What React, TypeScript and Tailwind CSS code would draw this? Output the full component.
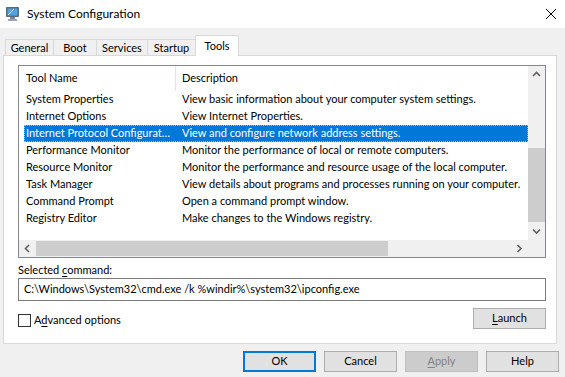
import React from "react";

const tools = [
  ["System Properties", "View basic information about your computer system settings."],
  ["Internet Options", "View Internet Properties."],
  ["Internet Protocol Configurat…", "View and configure network address settings."],
  ["Performance Monitor", "Monitor the performance of local or remote computers."],
  ["Resource Monitor", "Monitor the performance and resource usage of the local computer."],
  ["Task Manager", "View details about programs and processes running on your computer."],
  ["Command Prompt", "Open a command prompt window."],
  ["Registry Editor", "Make changes to the Windows registry."],
];

const tabs: [string, string][] = [
  ["General", "w-[48px]"],
  ["Boot", "w-[43px]"],
  ["Services", "w-[51px]"],
  ["Startup", "w-[48px]"],
];

function Chevron({ dir }: { dir: "up" | "down" | "left" | "right" }) {
  const d = {
    up: "M1 5 L4.5 1.5 L8 5",
    down: "M1 1.5 L4.5 5 L8 1.5",
    left: "M5 1 L1.5 4.5 L5 8",
    right: "M1.5 1 L5 4.5 L1.5 8",
  }[dir];
  const horiz = dir === "left" || dir === "right";
  return (
    <svg width={horiz ? 7 : 9} height={horiz ? 9 : 7} viewBox={horiz ? "0 0 7 9" : "0 0 9 7"}>
      <path d={d} fill="none" stroke="#606060" strokeWidth="1.6" />
    </svg>
  );
}

function AppIcon() {
  return (
    <svg width="16" height="16" viewBox="0 0 16 16">
      <rect x="1" y="1" width="13" height="10" rx="1" fill="#5a6a7e" />
      <rect x="2.5" y="2.5" width="10" height="7" fill="#4da3e8" />
      <path d="M3 9 L9 3" stroke="#cfe8ff" strokeWidth="1" />
      <rect x="5" y="11" width="5" height="2" fill="#7b8796" />
      <rect x="3" y="13" width="9" height="2" rx="0.5" fill="#9aa5b1" />
    </svg>
  );
}

function Button({ children, primary, disabled, className = "" }: { children: React.ReactNode; primary?: boolean; disabled?: boolean; className?: string }) {
  return (
    <div
      className={
        "flex items-center justify-center h-[21px] w-[73px] " +
        (primary
          ? "border-2 border-[#0078d7] bg-[#e1e1e1] text-black "
          : disabled
          ? "border border-[#bfbfbf] bg-[#cccccc] text-[#838383] "
          : "border border-[#adadad] bg-[#e1e1e1] text-black ") +
        className
      }
    >
      {children}
    </div>
  );
}

export default function App() {
  return (
    <div className="w-[565px] h-[377px] bg-[#f0f0f0] flex flex-col overflow-hidden text-[11px] text-black" style={{ fontFamily: "Lato, sans-serif" }}>
      {/* TITLE BAR */}
      <div className="h-[28px] bg-white flex items-center shrink-0">
        <div className="ml-[5px] mt-[-1px]"><AppIcon /></div>
        <span className="ml-[6px] text-[12px] mt-[-1px]">System Configuration</span>
        <svg className="ml-auto mr-[9px]" width="10" height="10" viewBox="0 0 10 10">
          <path d="M0 0 L10 10 M10 0 L0 10" stroke="#000" strokeWidth="1" />
        </svg>
      </div>

      {/* TABS */}
      <div className="flex items-end h-[21px] mt-[7px] ml-[5px] mb-[-1px] relative z-10">
        {tabs.map(([t, w]) => (
          <div key={t} className={"h-[16px] mb-px flex items-center justify-center border-t border-l border-[#d9d9d9] bg-[#f0f0f0] leading-none " + w}>
            {t}
          </div>
        ))}
        <div className="h-[21px] w-[44px] flex items-start justify-center pt-[4px] border-x border-t border-[#d9d9d9] bg-white leading-none">
          Tools
        </div>
      </div>

      {/* PANEL */}
      <div className="ml-[3px] w-[554px] h-[289px] border border-[#d9d9d9] bg-white pl-[14px] pr-[10px] pt-[9px] flex flex-col shrink-0">
        {/* LIST */}
        <div className="h-[193px] border border-[#828790] grid grid-cols-[1fr_17px] grid-rows-[1fr_17px]">
          <div className="overflow-hidden">
            <div className="h-[25px] flex items-center">
              <div className="w-[157px] pl-[7px] h-full flex items-center border-r border-[#e5e5e5]">Tool Name</div>
              <div className="pl-[6px]">Description</div>
            </div>
            {tools.map(([name, desc], i) => (
              <div
                key={name}
                className={
                  "h-[17px] ml-[5px] flex items-center whitespace-nowrap " +
                  (i === 2 ? "bg-[#0078d7] text-white border border-dotted border-[#f0a860]" : "border border-transparent")
                }
              >
                <div className="w-[157px] pl-[1px] shrink-0">{name}</div>
                <div>{desc}</div>
              </div>
            ))}
          </div>
          <div className="bg-[#f0f0f0] flex flex-col items-center">
            <div className="h-[17px] flex items-center"><Chevron dir="up" /></div>
            <div className="flex-1 w-full flex flex-col">
              <div className="h-[65px]" />
              <div className="h-[74px] w-full bg-[#cdcdcd]" />
            </div>
            <div className="h-[17px] flex items-center"><Chevron dir="down" /></div>
          </div>
          <div className="bg-[#f0f0f0] flex items-center">
            <div className="w-[17px] h-full flex items-center justify-center"><Chevron dir="left" /></div>
            <div className="flex-1 h-full flex items-stretch py-px">
              <div className="w-[352px] bg-[#cdcdcd]" />
            </div>
            <div className="w-[17px] h-full flex items-center justify-center"><Chevron dir="right" /></div>
          </div>
          <div className="bg-[#f0f0f0]" />
        </div>

        {/* SELECTED COMMAND */}
        <div className="mt-[5px] h-[14px] leading-[14px]">
          Selected <span className="underline underline-offset-2">c</span>ommand:
        </div>
        <div className="mt-px h-[23px] border border-[#7a7a7a] flex items-center pl-[5px] whitespace-nowrap">
          C:\Windows\System32\cmd.exe /k %windir%\system32\ipconfig.exe
        </div>

        {/* OPTIONS ROW */}
        <div className="mt-[7px] flex items-start">
          <div className="mt-[6px] w-[13px] h-[13px] border border-[#333333] bg-white" />
          <span className="ml-[3px] mt-[5px] leading-[14px]">
            A<span className="underline underline-offset-2">d</span>vanced options
          </span>
          <Button className="ml-auto">
            <span><span className="underline underline-offset-2">L</span>aunch</span>
          </Button>
        </div>
      </div>

      {/* BOTTOM BUTTONS */}
      <div className="flex mt-[7px] ml-[243px] gap-[8px]">
        <Button primary>OK</Button>
        <Button>Cancel</Button>
        <Button disabled>
          <span><span className="underline underline-offset-2">A</span>pply</span>
        </Button>
        <Button>Help</Button>
      </div>
    </div>
  );
}
